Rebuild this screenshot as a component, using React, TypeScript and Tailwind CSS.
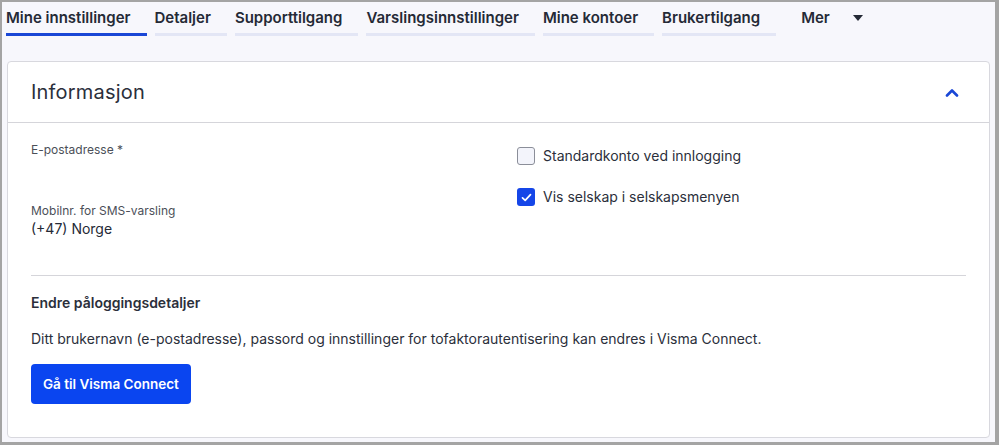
import React from "react";

const tabs = [
  { label: "Mine innstillinger", active: true },
  { label: "Detaljer" },
  { label: "Supporttilgang" },
  { label: "Varslingsinnstillinger" },
  { label: "Mine kontoer" },
  { label: "Brukertilgang" },
];

export default function App() {
  return (
    <div
      className="w-[999px] h-[445px] bg-[#f7f7fc] border-2 border-r-[4px] border-b-[3px] border-[#a4a4a4] text-[#252a36] flex flex-col overflow-hidden"
      style={{ fontFamily: "Inter, 'Noto Sans', 'Noto Sans CJK SC', sans-serif" }}
    >
      {/* Tabs */}
      <div className="flex items-start pl-[4px] pt-[6px] h-[59px]">
        {tabs.map((t) => (
          <div key={t.label} className="flex flex-col mr-[8px]">
            <span className="text-[15px] leading-[20px] font-semibold pr-4 whitespace-nowrap">{t.label}</span>
            <span
              className={
                t.active
                  ? "mt-[5px] h-[3px] bg-[#1a47d6]"
                  : "mt-[5px] h-[3px] bg-[#e3e6f5]"
              }
            />
          </div>
        ))}
        <div className="flex items-center ml-[17px]">
          <span className="text-[15px] leading-[20px] font-semibold">Mer</span>
          <svg width="10" height="6" viewBox="0 0 10 6" className="ml-[23px]">
            <path d="M0 0 L10 0 L5 6 Z" fill="#252a36" />
          </svg>
        </div>
      </div>

      {/* Card */}
      <div className="mx-[5px] bg-white border border-[#d8d8de] rounded-[4px] flex-1 mb-[4px]">
        <div className="h-[61px] flex items-center justify-between pl-[23px] pr-[30px] border-b border-[#d5d5da]">
          <h2 className="text-[20px] font-normal text-[#2b2f3b] tracking-[0.2px]">Informasjon</h2>
          <svg width="14" height="9" viewBox="0 0 14 9" fill="none">
            <path d="M2 7.5 L7 2.5 L12 7.5" stroke="#1a47d6" strokeWidth="2.6" strokeLinecap="round" strokeLinejoin="round" />
          </svg>
        </div>

        <div className="px-[23px]">
          <div className="grid grid-cols-[486px_1fr] pt-[19px] pb-[36px]">
            <div className="flex flex-col">
              <span className="text-[12px] leading-[16px] text-[#4b4f58]">E-postadresse *</span>
              <div className="h-[45px]" />
              <span className="text-[12px] leading-[16px] text-[#4b4f58]">Mobilnr. for SMS-varsling</span>
              <span className="text-[14px] leading-[20px] text-[#252a36]">(+47) Norge</span>
            </div>
            <div className="flex flex-col gap-[23px] pt-[5px]">
              <label className="flex items-center gap-[8px]">
                <span className="w-[18px] h-[18px] rounded-[3px] border border-[#8b8e99] bg-[#f3f4fb]" />
                <span className="text-[14px] leading-[18px] text-[#2b2f3b]">Standardkonto ved innlogging</span>
              </label>
              <label className="flex items-center gap-[8px]">
                <span className="w-[18px] h-[18px] rounded-[3px] bg-[#1546e8] flex items-center justify-center">
                  <svg width="11" height="9" viewBox="0 0 11 9" fill="none">
                    <path d="M1.5 4.8 L4.2 7.3 L9.5 1.7" stroke="white" strokeWidth="1.7" strokeLinecap="round" strokeLinejoin="round" />
                  </svg>
                </span>
                <span className="text-[14px] leading-[18px] text-[#2b2f3b]">Vis selskap i selskapsmenyen</span>
              </label>
            </div>
          </div>

          <div className="border-t border-[#d5d5da]" />

          <div className="pt-[17px]">
            <div className="text-[14px] leading-[20px] font-semibold text-[#2b2f3b]">Endre påloggingsdetaljer</div>
            <p className="mt-[16px] text-[14px] leading-[20px] text-[#2b2f3b]">
              Ditt brukernavn (e-postadresse), passord og innstillinger for tofaktorautentisering kan endres i Visma Connect.
            </p>
            <button className="mt-[15px] h-[40px] px-[12px] rounded-[4px] bg-[#0a45f0] text-white text-[13.5px] font-semibold">
              Gå til Visma Connect
            </button>
          </div>
        </div>
      </div>
    </div>
  );
}
